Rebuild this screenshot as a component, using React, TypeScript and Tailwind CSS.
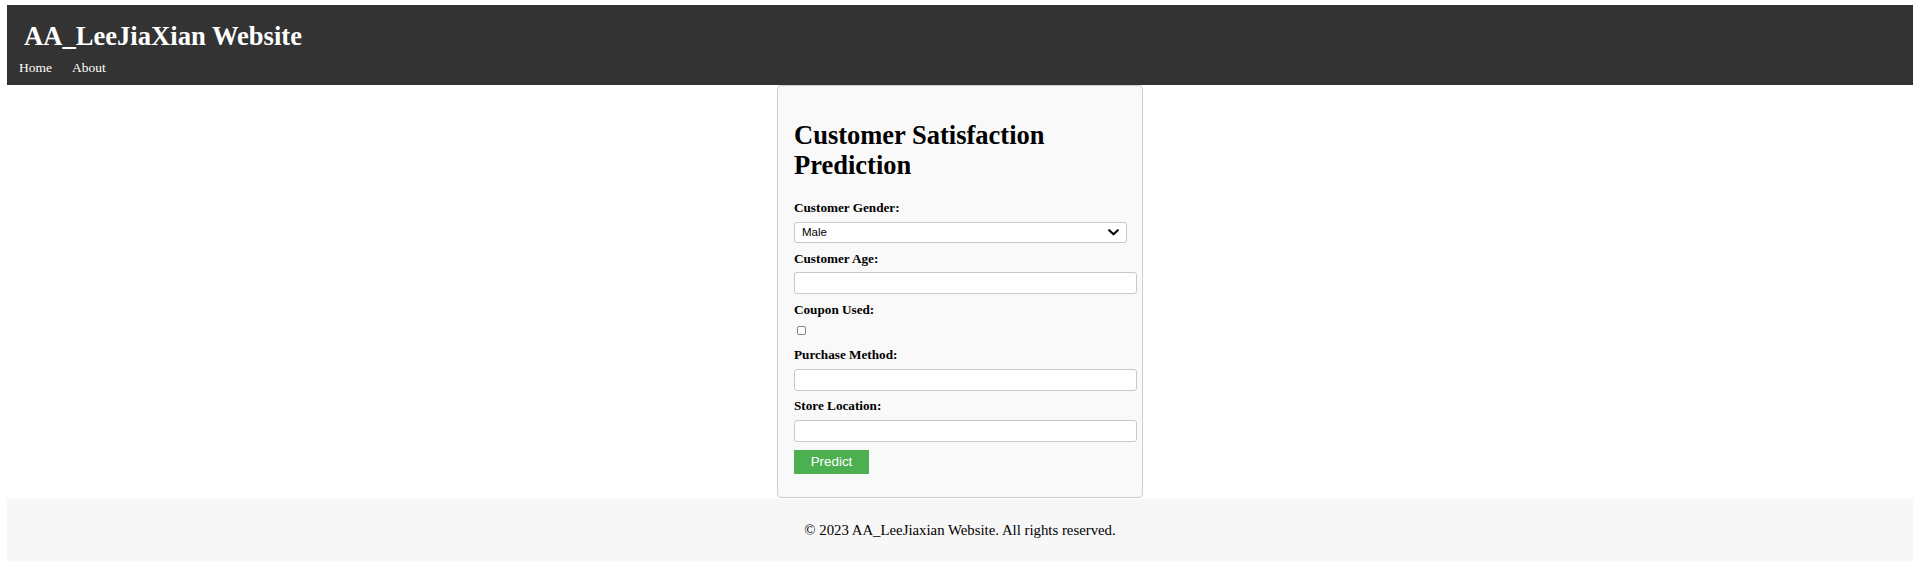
import React from "react";

function Label({ children }: { children: React.ReactNode }) {
  return (
    <label className="block text-[13.2px] font-bold leading-[16px] text-black">
      {children}
    </label>
  );
}

function TextInput({ className = "" }: { className?: string }) {
  return (
    <input
      type="text"
      className={`block h-[22px] w-[343px] rounded-[3px] border border-[#c8c8c8] bg-white px-[5px] font-['Liberation_Sans',Arial,sans-serif] text-[11.5px] outline-none ${className}`}
    />
  );
}

export default function App() {
  return (
    <div className="min-h-[581px] bg-white px-[7px] pt-[5px] font-['Liberation_Serif','Times_New_Roman',serif] text-black">
      <header className="bg-[#333333] pt-[16px] pb-[9px] text-white">
        <h1 className="pl-[17px] text-[26.6px] font-bold leading-[30px]">
          AA_LeeJiaXian Website
        </h1>
        <nav className="mt-[9px] flex gap-[20px] pl-[12px] text-[13.5px] leading-[16px]">
          <a href="#" className="text-white">Home</a>
          <a href="#" className="text-white">About</a>
        </nav>
      </header>

      <main className="flex justify-center">
        <div className="w-[366px] rounded-[4px] border border-[#cfcfcf] bg-[#f9f9f9] px-[16px] pt-[16px] pb-[23px]">
          <h2 className="mt-[18px] mb-[20px] text-[26.5px] font-bold leading-[30px]">
            Customer Satisfaction Prediction
          </h2>

          <Label>Customer Gender:</Label>
          <div className="relative mt-[6px] mb-[8px] h-[21px] w-[333px]">
            <select className="block h-[21px] w-full appearance-none rounded-[3px] border border-[#c8c8c8] bg-white pl-[7px] font-['Liberation_Sans',Arial,sans-serif] text-[11.5px] leading-[19px] text-black outline-none">
              <option>Male</option>
              <option>Female</option>
            </select>
            <svg
              className="pointer-events-none absolute right-[8px] top-[7px]"
              width="11"
              height="7"
              viewBox="0 0 11 7"
              fill="none"
            >
              <path d="M1.2 1.2 L5.5 5.3 L9.8 1.2" stroke="#000" strokeWidth="2.1" strokeLinecap="round" strokeLinejoin="round" />
            </svg>
          </div>

          <Label>Customer Age:</Label>
          <TextInput className="mt-[5px] mb-[8px]" />

          <Label>Coupon Used:</Label>
          <input
            type="checkbox"
            className="ml-[3px] mt-[8px] mb-[12px] block h-[9px] w-[9px] appearance-none rounded-[2px] border border-[#858585] bg-white"
          />

          <Label>Purchase Method:</Label>
          <TextInput className="mt-[6px] mb-[7px]" />

          <Label>Store Location:</Label>
          <TextInput className="mt-[6px] mb-[8px]" />

          <button className="block h-[24px] w-[75px] bg-[#4caf50] font-['Liberation_Sans',Arial,sans-serif] text-[13.4px] leading-[24px] text-white">
            Predict
          </button>
        </div>
      </main>

      <footer className="mt-[1px] bg-[#f7f7f7] py-[22px] text-center text-[14.8px] leading-[18px] text-black">
        © 2023 AA_LeeJiaxian Website. All rights reserved.
      </footer>
    </div>
  );
}
